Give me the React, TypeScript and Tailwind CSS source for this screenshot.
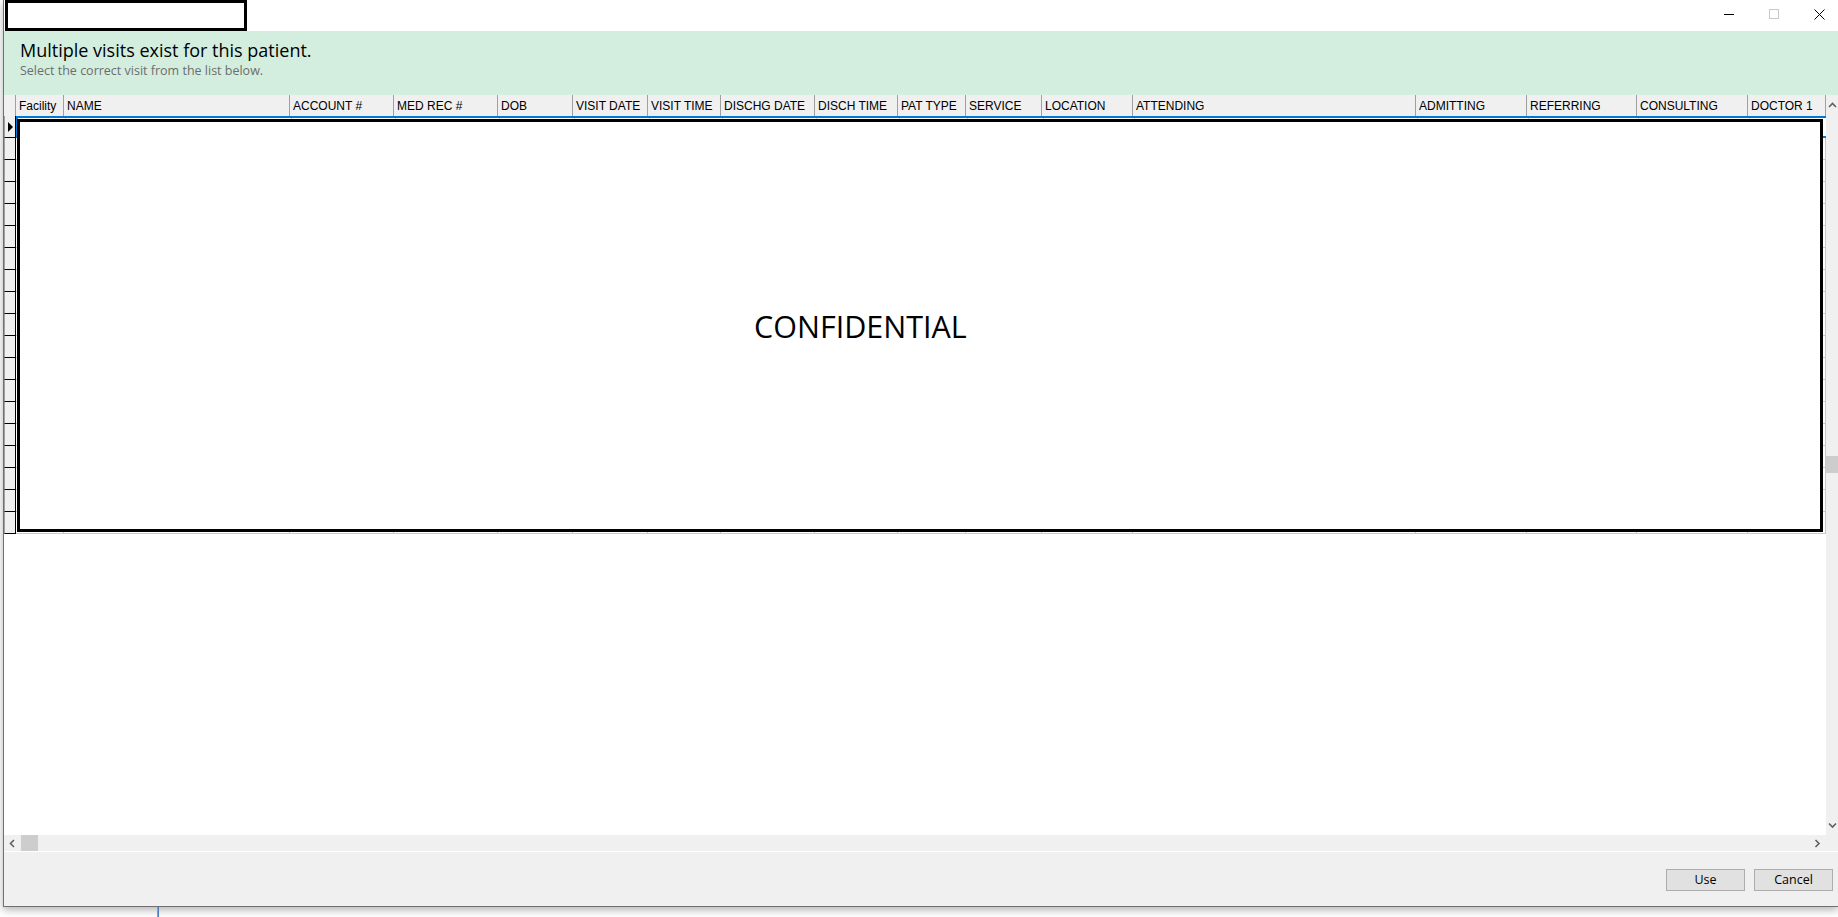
import React from 'react';

/**
 * Visit picker dialog: header band, grid with a redacted block, scrollbars and footer buttons.
 */

interface Column {
  label: string;
  width: string;
}

const columns: Column[] = [
  { label: 'Facility', width: 'w-[48px]' },
  { label: 'NAME', width: 'w-[226px]' },
  { label: 'ACCOUNT #', width: 'w-[104px]' },
  { label: 'MED REC #', width: 'w-[104px]' },
  { label: 'DOB', width: 'w-[75px]' },
  { label: 'VISIT DATE', width: 'w-[75px]' },
  { label: 'VISIT TIME', width: 'w-[73px]' },
  { label: 'DISCHG DATE', width: 'w-[94px]' },
  { label: 'DISCH TIME', width: 'w-[83px]' },
  { label: 'PAT TYPE', width: 'w-[68px]' },
  { label: 'SERVICE', width: 'w-[76px]' },
  { label: 'LOCATION', width: 'w-[91px]' },
  { label: 'ATTENDING', width: 'w-[283px]' },
  { label: 'ADMITTING', width: 'w-[111px]' },
  { label: 'REFERRING', width: 'w-[110px]' },
  { label: 'CONSULTING', width: 'w-[111px]' },
  { label: 'DOCTOR 1', width: 'w-[78px]' },
];

const ROW_COUNT = 19;

function Chevron({ dir }: { dir: 'up' | 'down' | 'left' | 'right' }) {
  const paths: Record<string, string> = {
    up: 'M1 6 L4.5 2.5 L8 6',
    down: 'M1 2.5 L4.5 6 L8 2.5',
    left: 'M6 1 L2.5 4.5 L6 8',
    right: 'M2.5 1 L6 4.5 L2.5 8',
  };
  return (
    <svg width="9" height="9" viewBox="0 0 9 9" fill="none">
      <path d={paths[dir]} stroke="#606060" strokeWidth={1.6} />
    </svg>
  );
}

function TitleBar() {
  return (
    <div className="h-[31px] flex items-start bg-white">
      <div className="ml-[1px] w-[242px] h-[31px] border-[3px] border-black bg-white" />
      <div className="flex-1" />
      <div className="flex items-center h-[28px]">
        <svg width="10" height="10" viewBox="0 0 10 10">
          <path d="M0 5.5 H10" stroke="#000" strokeWidth={1} />
        </svg>
        <svg width="10" height="10" viewBox="0 0 10 10" className="ml-[35px]">
          <rect x="0.5" y="0.5" width="9" height="9" fill="none" stroke="#c8c8c8" strokeWidth={1} />
        </svg>
        <svg width="11" height="11" viewBox="0 0 11 11" className="ml-[35px] mr-[13px]">
          <path d="M0.5 0.5 L10.5 10.5 M10.5 0.5 L0.5 10.5" stroke="#000" strokeWidth={1} />
        </svg>
      </div>
    </div>
  );
}

function Banner() {
  return (
    <div className="h-[64px] bg-[#d3eedf] pl-[16px] pt-[7px]" style={{ fontFamily: '"Open Sans", "Noto Sans", sans-serif' }}>
      <div className="text-[18px] leading-[24px] text-black">Multiple visits exist for this patient.</div>
      <div className="mt-[1px] text-[12.5px] leading-[15px] text-[#6d6d6d]">Select the correct visit from the list below.</div>
    </div>
  );
}

function HeaderRow() {
  return (
    <div className="flex h-[21px] bg-[#f0f0f0]">
      <div className="w-[12px] border-r border-[#a0a0a0]" />
      {columns.map((c) => (
        <div
          key={c.label}
          className={`${c.width} shrink-0 border-r border-[#a0a0a0] pl-[3px] pt-[2px] text-[12px] leading-[19px] text-black whitespace-nowrap overflow-hidden`}
        >
          {c.label}
        </div>
      ))}
    </div>
  );
}

function GridRow({ index }: { index: number }) {
  const selected = index === 0;
  return (
    <div className="flex h-[22px]">
      <div className="w-[12px] shrink-0 bg-[#f0f0f0] border-l border-l-[#a0a0a0] border-r border-b border-black flex items-center justify-center">
        {selected && (
          <svg width="5" height="10" viewBox="0 0 5 10">
            <path d="M0 0 L5 5 L0 10 Z" fill="#000" />
          </svg>
        )}
      </div>
      <div
        className={
          selected
            ? 'flex-1 flex border-2 border-[#0078d7]'
            : 'flex-1 flex border-b border-[#c8c8c8]'
        }
      >
        {columns.map((c) => (
          <div key={c.label} className={`${c.width} shrink-0 border-r border-[#c8c8c8]`} />
        ))}
      </div>
    </div>
  );
}

function Grid() {
  return (
    <div className="flex h-[740px]">
      <div className="relative w-[1822px] flex flex-col bg-white overflow-hidden">
        <HeaderRow />
        {Array.from({ length: ROW_COUNT }).map((_, i) => (
          <GridRow key={i} index={i} />
        ))}
        <div className="flex-1 bg-white" />

        {/* redaction block laid over the rows */}
        <div
          className="absolute left-[13px] top-[24px] w-[1806px] h-[413px] border-[3px] border-black bg-white"
          style={{ fontFamily: '"Open Sans", "Noto Sans", sans-serif' }}
        >
          <div className="pl-[734px] pt-[185px] text-[30.5px] leading-[38px] text-black">CONFIDENTIAL</div>
        </div>
      </div>
      <div className="w-[12px] bg-[#f0f0f0] flex flex-col items-center">
        <div className="h-[21px] flex items-center">
          <Chevron dir="up" />
        </div>
        <div className="h-[340px]" />
        <div className="w-full h-[17px] bg-[#cdcdcd]" />
        <div className="flex-1" />
        <div className="h-[20px] flex items-center">
          <Chevron dir="down" />
        </div>
      </div>
    </div>
  );
}

function HScroll() {
  return (
    <div className="h-[16px] flex bg-[#f0f0f0]">
      <div className="w-[16px] flex items-center justify-center">
        <Chevron dir="left" />
      </div>
      <div className="w-[17px] h-full bg-[#cdcdcd] ml-px" />
      <div className="flex-1" />
      <div className="w-[16px] flex items-center justify-center mr-[13px]">
        <Chevron dir="right" />
      </div>
    </div>
  );
}

function Footer() {
  const btn =
    'w-[79px] h-[22px] bg-[#e1e1e1] border border-[#adadad] text-[12.5px] text-black flex items-center justify-center';
  return (
    <div
      className="h-[55px] border-t border-white bg-[#f0f0f0] flex justify-end items-start pt-[17px] pr-[5px] gap-[9px]"
      style={{ fontFamily: '"Open Sans", "Noto Sans", sans-serif' }}
    >
      <button className={btn}>Use</button>
      <button className={btn}>Cancel</button>
    </div>
  );
}

export default function App() {
  return (
    <div
      className="w-[1838px] h-[917px] bg-white overflow-hidden flex flex-col"
      style={{ fontFamily: '"Liberation Sans", Arial, sans-serif' }}
    >
      <div className="ml-[3px] w-[1835px] flex flex-col border-l border-b border-[#707070] shadow-[0_3px_8px_rgba(0,0,0,0.3)]">
        <TitleBar />
        <Banner />
        <Grid />
        <HScroll />
        <Footer />
      </div>
      <div className="flex-1 flex">
        <div className="ml-[157px] w-[2px] border-l border-[#9a9a9a] border-r border-r-[#4a7fc1]" />
      </div>
    </div>
  );
}
